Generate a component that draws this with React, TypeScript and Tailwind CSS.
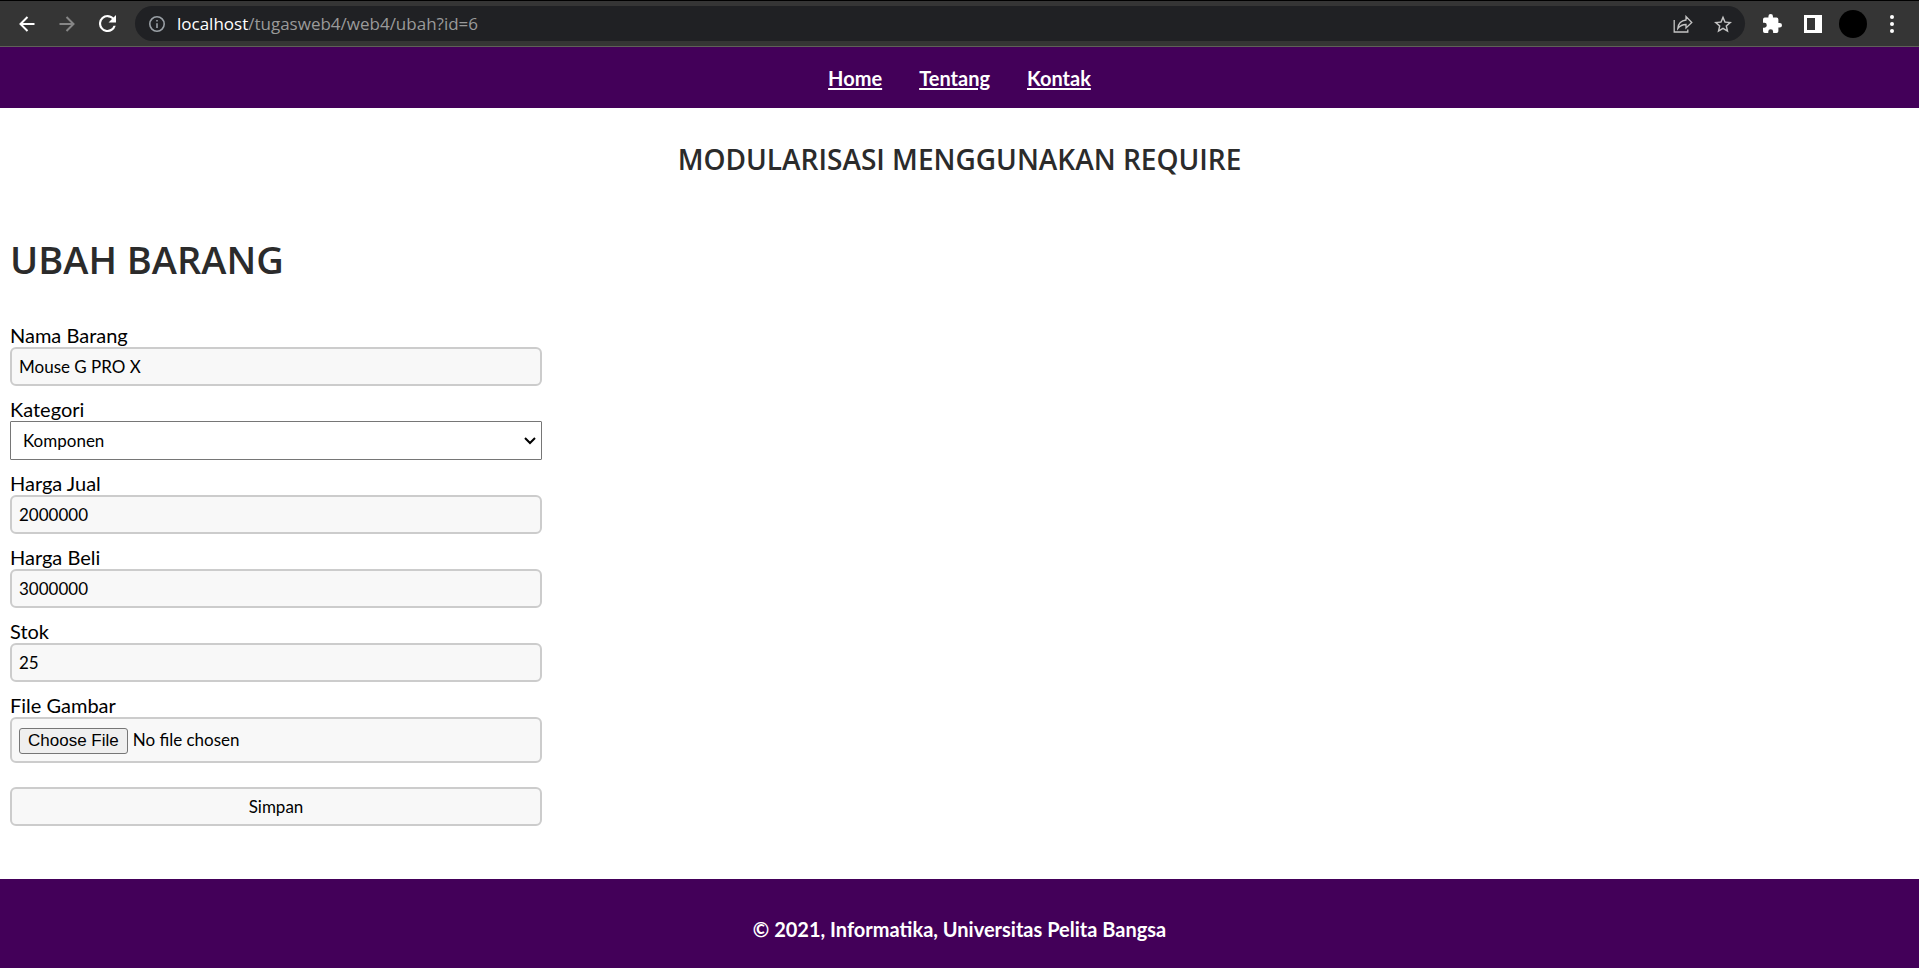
import type { ReactNode } from "react";

const navLinks = ["Home", "Tentang", "Kontak"];

const fieldBox =
  "h-[39px] w-full rounded-md border-2 border-[#cccccc] bg-[#f8f8f8] px-[7px] text-[17px] text-black";

const heading = "font-['Trebuchet_MS','Open_Sans',sans-serif] font-semibold text-[#2b2b2b]";

function Field({ id, label, children }: { id: string; label: string; children: ReactNode }) {
  return (
    <div className="flex flex-col">
      <label htmlFor={id} className="text-[20px] leading-6">
        {label}
      </label>
      {children}
    </div>
  );
}

function TextField({ id, label, value }: { id: string; label: string; value: string }) {
  return (
    <Field id={id} label={label}>
      <input id={id} name={id} type="text" defaultValue={value} className={fieldBox} />
    </Field>
  );
}

function BrowserBar() {
  return (
    <div className="flex h-[47px] items-center border-t border-b border-t-black border-b-[#5f6058] bg-[#353535] pr-[19px] pl-[15px] text-white">
      <div className="flex items-center gap-4">
        <button type="button" aria-label="Back" className="flex size-6 items-center justify-center">
          <svg viewBox="0 0 16 16" className="size-4" fill="none" stroke="currentColor" strokeWidth="2">
            <path d="M15.5 8H2M8.5 1L1.5 8l7 7" />
          </svg>
        </button>
        <button type="button" aria-label="Forward" className="flex size-6 items-center justify-center text-[#868686]">
          <svg viewBox="0 0 16 16" className="size-4" fill="none" stroke="currentColor" strokeWidth="2">
            <path d="M.5 8H14M7.5 1l7 7-7 7" />
          </svg>
        </button>
        <button type="button" aria-label="Reload" className="flex size-6 items-center justify-center">
          <svg viewBox="4 4 16 16" className="size-[17px]" fill="currentColor">
            <path d="M17.65 6.35C16.2 4.9 14.21 4 12 4a8 8 0 1 0 7.73 10h-2.08A6 6 0 1 1 12 6c1.66 0 3.14.69 4.22 1.78L13 11h7V4z" />
          </svg>
        </button>
      </div>
      <div className="ml-4 flex h-[35px] grow items-center rounded-full bg-[#202124] pr-[13px] pl-[14px]">
        <svg viewBox="2 2 20 20" className="size-4 shrink-0" fill="#9aa0a6">
          <path d="M11 7h2v2h-2zm0 4h2v6h-2zm1-9a10 10 0 1 0 0 20 10 10 0 0 0 0-20zm0 18a8 8 0 1 1 0-16 8 8 0 0 1 0 16z" />
        </svg>
        <div className="ml-3 grow font-['Segoe_UI','Open_Sans',sans-serif] text-[17px] leading-6 text-[#9a9a9a]">
          <span className="text-white">localhost</span>/tugasweb4/web4/ubah?id=6
        </div>
        <div className="flex items-center gap-[21px] text-[#c4c4c4]">
          <button type="button" aria-label="Share">
            <svg viewBox="0 0 20 18" className="h-[18px] w-5" fill="none" stroke="currentColor" strokeWidth="1.3">
              <path d="M1.2 5v12h13.6v-2.5" />
              <path d="M4.8 13.5C5.3 8.5 8.5 5.5 13 5V1.5l5.8 6L13 13V9.5c-3.5 0-6 1.2-8.2 4z" />
            </svg>
          </button>
          <button type="button" aria-label="Bookmark">
            <svg viewBox="2 2 20 19" className="size-[18px]" fill="currentColor">
              <path d="M22 9.24l-7.19-.62L12 2 9.19 8.63 2 9.24l5.46 4.73L5.82 21 12 17.27 18.18 21l-1.63-7.03L22 9.24zM12 15.4l-3.76 2.27 1-4.28-3.32-2.88 4.38-.38L12 6.1l1.71 4.04 4.38.38-3.32 2.88 1 4.28L12 15.4z" />
            </svg>
          </button>
        </div>
      </div>
      <div className="ml-[18px] flex items-center">
        <button type="button" aria-label="Extensions">
          <svg viewBox="2 1 21 21" className="size-[19px]" fill="currentColor">
            <path d="M20.5 11H19V7a2 2 0 0 0-2-2h-4V3.5a2.5 2.5 0 0 0-5 0V5H4a2 2 0 0 0-1.99 2v3.8H3.5a2.7 2.7 0 0 1 0 5.4H2V20a2 2 0 0 0 2 2h3.8v-1.5a2.7 2.7 0 0 1 5.4 0V22H17a2 2 0 0 0 2-2v-4h1.5a2.5 2.5 0 0 0 0-5z" />
          </svg>
        </button>
        <button type="button" aria-label="Side panel" className="ml-[22px]">
          <svg viewBox="0 0 18 18" className="size-[18px]">
            <path fill="#fff" fillRule="evenodd" d="M0 0h18v18H0zM3 3v12h8V3z" />
          </svg>
        </button>
        <button type="button" aria-label="Profile" className="ml-[17px] size-7 rounded-full bg-black" />
        <button type="button" aria-label="Menu" className="ml-[17px] flex w-4 justify-center">
          <svg viewBox="0 0 4 18" className="h-[18px] w-1" fill="currentColor">
            <circle cx="2" cy="2" r="2" />
            <circle cx="2" cy="9" r="2" />
            <circle cx="2" cy="16" r="2" />
          </svg>
        </button>
      </div>
    </div>
  );
}

export default function App() {
  return (
    <div className="flex min-h-screen flex-col bg-white font-['Trebuchet_MS',Lato,sans-serif] text-black">
      <BrowserBar />
      <nav className="flex h-[61px] items-center justify-center gap-[37px] bg-[#430059] text-[20px] font-bold text-white">
        {navLinks.map((link) => (
          <a key={link} href={"#" + link.toLowerCase()} className="underline decoration-2 underline-offset-2">
            {link}
          </a>
        ))}
      </nav>
      <header className="pt-[31px] text-center">
        <h2 className={heading + " text-[28px] leading-10"}>MODULARISASI MENGGUNAKAN REQUIRE</h2>
      </header>
      <main className="grow px-[10px] pt-[52px] pb-[51px]">
        <h1 className={heading + " text-[38px] leading-[56px]"}>UBAH BARANG</h1>
        <form className="mt-9 flex w-[532px] max-w-full flex-col gap-[11px]" onSubmit={(e) => e.preventDefault()}>
          <TextField id="nama" label="Nama Barang" value="Mouse G PRO X" />
          <Field id="kategori" label="Kategori">
            <div className="relative">
              <select
                id="kategori"
                name="kategori"
                defaultValue="Komponen"
                className="block h-[39px] w-full appearance-none rounded-[1px] border border-[#767676] bg-white px-3 text-[17px] text-black"
              >
                <option>Komponen</option>
              </select>
              <svg
                viewBox="0 0 12 8"
                className="pointer-events-none absolute top-4 right-[6px] h-2 w-3"
                fill="none"
                stroke="#000"
                strokeWidth="2"
              >
                <path d="M1 1l5 5 5-5" />
              </svg>
            </div>
          </Field>
          <TextField id="harga_jual" label="Harga Jual" value="2000000" />
          <TextField id="harga_beli" label="Harga Beli" value="3000000" />
          <TextField id="stok" label="Stok" value="25" />
          <Field id="file_gambar" label="File Gambar">
            <input
              id="file_gambar"
              name="file_gambar"
              type="file"
              className="h-[46px] w-full rounded-md border-2 border-[#cccccc] bg-[#f8f8f8] px-[7px] py-2 text-[17px] leading-[26px] file:mr-[5px] file:h-[26px] file:rounded-[3px] file:border file:border-solid file:border-[#767676] file:bg-[#efefef] file:px-2 file:font-['Liberation_Sans',sans-serif] file:text-[17px] file:leading-6 file:font-normal file:text-black"
            />
          </Field>
          <button type="submit" className={fieldBox + " mt-[13px]"}>
            Simpan
          </button>
        </form>
      </main>
      <footer className="flex h-[89px] items-center justify-center bg-[#430059] pt-[10px] text-[20px] font-bold text-white">
        <p>© 2021, Informatika, Universitas Pelita Bangsa</p>
      </footer>
    </div>
  );
}
